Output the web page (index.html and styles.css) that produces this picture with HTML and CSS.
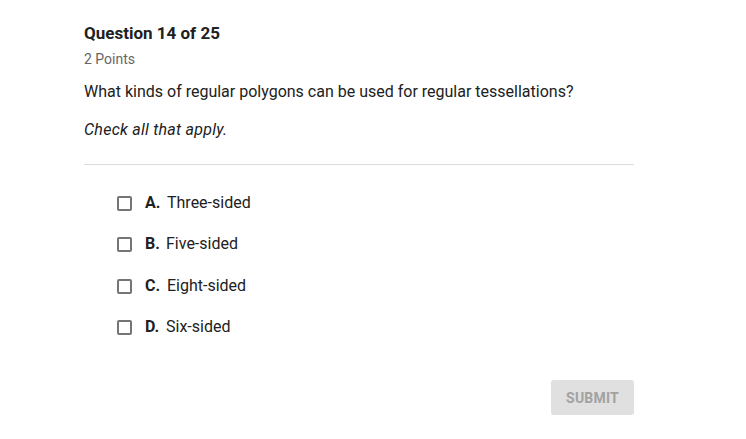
FILE: index.html
```html
<!DOCTYPE html>
<html>
<head>
<meta charset="utf-8">
<link rel="stylesheet" href="styles.css">
</head>
<body>
<div class="quiz">
  <h1 class="title">Question 14 of 25</h1>
  <div class="points">2 Points</div>
  <p class="prompt">What kinds of regular polygons can be used for regular tessellations?</p>
  <p class="hint">Check all that apply.</p>
  <hr class="divider">
  <ul class="options">
    <li class="option"><span class="box"></span><span class="letter">A.</span><span class="text">Three-sided</span></li>
    <li class="option"><span class="box"></span><span class="letter">B.</span><span class="text">Five-sided</span></li>
    <li class="option"><span class="box"></span><span class="letter">C.</span><span class="text">Eight-sided</span></li>
    <li class="option"><span class="box"></span><span class="letter">D.</span><span class="text">Six-sided</span></li>
  </ul>
  <div class="actions"><button class="submit">SUBMIT</button></div>
</div>
</body>
</html>
```
FILE: styles.css
```css
html, body {
  margin: 0;
  padding: 0;
  background: #ffffff;
  font-family: Roboto, "Liberation Sans", sans-serif;
  color: #212121;
}
.quiz {
  width: 550px;
  margin-left: 84px;
  padding-top: 23px;
}
.title {
  margin: 0;
  font-size: 17px;
  font-weight: 700;
  line-height: 20px;
  color: #212121;
}
.points {
  margin-top: 8px;
  font-size: 14px;
  line-height: 16px;
  color: #666666;
}
.prompt {
  margin: 15px 0 0;
  font-size: 16px;
  line-height: 20px;
  color: #212121;
}
.hint {
  margin: 18px 0 0;
  font-size: 16px;
  line-height: 20px;
  font-style: italic;
  letter-spacing: 0.25px;
  color: #212121;
}
.divider {
  margin: 24px 0 0;
  border: 0;
  border-top: 1px solid #dcdcdc;
  height: 0;
}
.options {
  list-style: none;
  margin: 27px 0 0;
  padding: 0 0 0 33px;
  display: flex;
  flex-direction: column;
  gap: 21.67px;
}
.option {
  display: flex;
  align-items: center;
  height: 20px;
  font-size: 16px;
  color: #212121;
}
.box {
  width: 11px;
  height: 11px;
  border: 2px solid #757575;
  border-radius: 2px;
  margin-top: 2px;
  margin-right: 13px;
}
.letter {
  font-weight: 700;
  width: 22px;
}
.option:nth-child(2) .letter,
.option:nth-child(4) .letter { width: 21px; }
.actions {
  display: flex;
  justify-content: flex-end;
  margin-top: 43px;
}
.submit {
  width: 83px;
  height: 35px;
  border: 0;
  border-radius: 3px;
  background: #e0e0e0;
  color: #a2a2a2;
  font-family: Roboto, "Liberation Sans", sans-serif;
  font-size: 14px;
  font-weight: 700;
  letter-spacing: 0.2px;
  padding: 2px 0 0;
}
```
